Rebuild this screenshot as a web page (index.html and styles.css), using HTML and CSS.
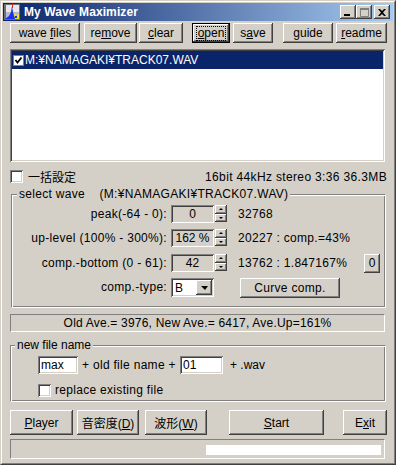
FILE: index.html
```html
<!doctype html>
<html lang="ja">

<head>
    <meta charset="utf-8">
    <title>My Wave Maximizer</title>
    <link rel="stylesheet" href="styles.css">
</head>

<body>

    <div class="window">
        <div class="frame">

            <div class="titlebar">
                <svg class="appicon" width="16" height="16" viewBox="0 0 16 16">
                    <rect x="0" y="0" width="16" height="16" fill="#6c6c7c" />
                    <rect x="2" y="1" width="13" height="7" fill="#e8e8e8" />
                    <rect x="2" y="8" width="13" height="7" fill="#b8b8c8" />
                    <polygon points="1,15 5,12 7,8 8,2 9,8 10,12 13,15" fill="#1830f0" />
                    <rect x="8" y="0" width="1" height="4" fill="#f02020" />
                    <polygon points="10,10 12,10 12,13 14,10 15,10 15,15 11,15" fill="#f0e020" />
                    <rect x="11" y="12" width="2" height="2" fill="#1830f0" />
                </svg>
                <span class="title">My Wave Maximizer</span>
                <div class="caption-btns">
                    <span class="cbtn">
                        <svg width="8" height="7" viewBox="0 0 8 7"><rect x="0" y="5" width="6" height="2" fill="#000" /></svg>
                    </span>
                    <span class="cbtn">
                        <svg width="9" height="9" viewBox="0 0 9 9"><path d="M0.5 1.5h8v7h-8z" fill="none" stroke="#808080" /><rect x="0" y="0" width="9" height="2" fill="#808080" /></svg>
                    </span>
                    <span class="cbtn close">
                        <svg width="8" height="7" viewBox="0 0 8 7"><path d="M0 0h2l2 2 2-2h2l-3 3.5 3 3.5h-2l-2-2-2 2h-2l3-3.5z" fill="#000" /></svg>
                    </span>
                </div>
            </div>

            <div class="client">

                <div class="toolbar">
                    <div class="btn b-wave"><span>wave <u>f</u>iles</span></div>
                    <div class="btn b-remove"><span>re<u>m</u>ove</span></div>
                    <div class="btn b-clear"><span><u>c</u>lear</span></div>
                    <div class="btn default b-open"><span class="focus"><u>o</u>pen</span></div>
                    <div class="btn b-save"><span>s<u>a</u>ve</span></div>
                    <div class="btn b-guide"><span><u>g</u>uide</span></div>
                    <div class="btn b-readme"><span><u>r</u>eadme</span></div>
                </div>

                <div class="listbox">
                    <div class="list-item selected">
                        <svg class="list-check" width="11" height="11" viewBox="0 0 11 11">
                            <rect x="0.5" y="0.5" width="10" height="10" fill="#fff" stroke="#808080" />
                            <path d="M2.5 5 l2 2.5 l4-5" fill="none" stroke="#000" stroke-width="1.8" />
                        </svg>
                        <span>M:¥NAMAGAKI¥TRACK07.WAV</span>
                    </div>
                </div>

                <div class="info-row">
                    <div class="check">
                        <span class="checkbox"></span>
                        <span>一括設定</span>
                    </div>
                    <span class="info">16bit 44kHz stereo 3:36 36.3MB</span>
                </div>

                <div class="group select-wave">
                    <span class="legend">select wave&nbsp;&nbsp;&nbsp;&nbsp;(M:¥NAMAGAKI¥TRACK07.WAV)</span>

                    <div class="param-row r-peak">
                        <span class="param-label">peak(-64 - 0):</span>
                        <span class="edit ro">0</span>
                        <span class="spin"><span class="spin-btn"><i class="up"></i></span><span class="spin-btn"><i class="down"></i></span></span>
                        <span class="param-value">32768</span>
                    </div>

                    <div class="param-row r-level">
                        <span class="param-label">up-level (100% - 300%):</span>
                        <span class="edit ro">162 %</span>
                        <span class="spin"><span class="spin-btn"><i class="up"></i></span><span class="spin-btn"><i class="down"></i></span></span>
                        <span class="param-value">20227 : comp.=43%</span>
                    </div>

                    <div class="param-row r-bottom">
                        <span class="param-label">comp.-bottom (0 - 61):</span>
                        <span class="edit ro">42</span>
                        <span class="spin"><span class="spin-btn"><i class="up"></i></span><span class="spin-btn"><i class="down"></i></span></span>
                        <span class="param-value">13762 : 1.847167%</span>
                        <div class="btn b-zero">0</div>
                    </div>

                    <div class="param-row r-type">
                        <span class="param-label">comp.-type:</span>
                        <span class="combo">
                            <span class="combo-text">B</span>
                            <span class="combo-btn"><i class="drop"></i></span>
                        </span>
                        <div class="btn b-curve">Curve comp.</div>
                    </div>
                </div>

                <div class="panel">Old Ave.= 3976, New Ave.= 6417, Ave.Up=161%</div>

                <div class="group new-name">
                    <span class="legend">new file name</span>

                    <div class="name-row">
                        <span class="edit white e-prefix">max</span>
                        <span class="name-text">+ old file name +</span>
                        <span class="edit white e-number">01</span>
                        <span class="ext">+ .wav</span>
                    </div>

                    <div class="check replace">
                        <span class="checkbox"></span>
                        <span>replace existing file</span>
                    </div>
                </div>

                <div class="actions">
                    <div class="btn b-player"><span><u>P</u>layer</span></div>
                    <div class="btn b-density"><span>音密度(<u>D</u>)</span></div>
                    <div class="btn b-wave2"><span>波形(<u>W</u>)</span></div>
                    <div class="btn b-start"><span><u>S</u>tart</span></div>
                    <div class="btn b-exit"><span>E<u>x</u>it</span></div>
                </div>

                <div class="statusbar">
                    <span class="progress"></span>
                </div>

            </div>
        </div>
    </div>

</body>

</html>
```

FILE: styles.css
```css
body {
    margin: 0;
    padding: 0;
    background-color: #d4d0c8;
    font-family: "Liberation Sans", "Noto Sans CJK JP", sans-serif;
    font-size: 12px;
    color: #000;
}

u {
    text-decoration: underline;
    text-underline-offset: 1px;
}

.window {
    box-sizing: border-box;
    width: 396px;
    height: 465px;
    border: 1px solid;
    border-color: #d4d0c8 #404040 #404040 #d4d0c8;
    background: #d4d0c8;
}

.frame {
    box-sizing: border-box;
    height: 100%;
    border: 1px solid;
    border-color: #fff #808080 #808080 #fff;
    padding: 1px;
}

/* title bar */

.titlebar {
    display: flex;
    align-items: center;
    height: 18px;
    padding-left: 1px;
    padding-right: 3px;
    background: linear-gradient(to right, #0a246a, #a6caf0);
}

.appicon {
    flex: none;
}

.title {
    margin-left: 4px;
    color: #fff;
    font-weight: bold;
    font-size: 12px;
    letter-spacing: 0.1px;
}

.caption-btns {
    display: flex;
    margin-left: auto;
}

.cbtn {
    display: flex;
    align-items: center;
    justify-content: center;
    width: 16px;
    height: 14px;
    background: #d4d0c8;
    box-shadow: inset -1px -1px #404040, inset 1px 1px #fff, inset -2px -2px #808080;
}

.cbtn.close {
    margin-left: 2px;
}

/* bevels */

.btn {
    box-sizing: border-box;
    display: flex;
    align-items: center;
    justify-content: center;
    flex: none;
    background: #d4d0c8;
    box-shadow: inset -1px -1px #404040, inset 1px 1px #fff, inset -2px -2px #808080;
    white-space: nowrap;
}

.btn.default {
    box-shadow: inset 0 0 0 1px #000, inset -2px -2px #404040, inset 2px 2px #fff, inset -3px -3px #808080;
}

.focus {
    outline: 1px dotted #000;
    outline-offset: 0;
    padding: 0 1px;
    line-height: 13px;
}

.edit {
    box-sizing: border-box;
    display: flex;
    align-items: center;
    flex: none;
    height: 18px;
    box-shadow: inset 1px 1px #808080, inset -1px -1px #fff, inset 2px 2px #404040, inset -2px -2px #d4d0c8;
}

.edit.ro {
    justify-content: center;
    width: 43px;
    margin-left: 4px;
    background: #d4d0c8;
}

.edit.white {
    background: #fff;
    padding-left: 3px;
}

.checkbox {
    display: inline-block;
    box-sizing: border-box;
    width: 13px;
    height: 13px;
    background: #fff;
    box-shadow: inset 1px 1px #808080, inset -1px -1px #fff, inset 2px 2px #404040, inset -2px -2px #d4d0c8;
    flex: none;
}

.check {
    display: flex;
    align-items: center;
    gap: 5px;
}

/* client area */

.client {
    padding-left: 7px;
}

.toolbar {
    display: flex;
    height: 20px;
    margin-top: 2px;
}

.toolbar .btn {
    height: 20px;
}

.b-wave { width: 70px; }
.b-remove { width: 53px; margin-left: 4px; }
.b-clear { width: 44px; margin-left: 2px; }
.b-open { width: 38px; margin-left: 9px; }
.b-save { width: 40px; margin-left: 3px; }
.b-guide { width: 50px; margin-left: 10px; }
.b-readme { width: 51px; margin-left: 3px; }

.listbox {
    box-sizing: border-box;
    width: 375px;
    height: 113px;
    margin-top: 6px;
    padding: 2px;
    background: #fff;
    box-shadow: inset 1px 1px #808080, inset -1px -1px #fff, inset 2px 2px #404040, inset -2px -2px #d4d0c8;
}

.list-item {
    display: flex;
    align-items: center;
    height: 18px;
}

.list-item.selected {
    background: #0a246a;
    color: #fff;
}

.list-check {
    margin-left: 1px;
    margin-right: 1px;
}

.info-row {
    display: flex;
    justify-content: space-between;
    align-items: center;
    width: 377px;
    height: 13px;
    margin-top: 8px;
}

.info {
    letter-spacing: 0.35px;
}

/* group boxes */

.group {
    box-sizing: border-box;
    border: 1px solid;
    border-color: #808080 #fff #fff #808080;
    box-shadow: inset 1px 1px #fff, inset -1px -1px #808080;
}

.legend {
    display: block;
    width: fit-content;
    height: 13px;
    line-height: 13px;
    margin-top: -7px;
    padding: 0 2px;
    background: #d4d0c8;
}

.select-wave {
    width: 375px;
    height: 114px;
    margin-top: 11px;
    margin-left: 1px;
}

.select-wave .legend {
    margin-left: 5px;
    letter-spacing: 0.3px;
}

.param-row {
    display: flex;
    align-items: center;
    height: 18px;
}

.r-peak { margin-top: 4px; }
.r-level { margin-top: 6px; }
.r-bottom { margin-top: 7px; }
.r-type {
    margin-top: 6px;
    height: 20px;
    align-items: flex-start;
}

.param-label {
    width: 155px;
    text-align: right;
    letter-spacing: 0.3px;
    flex: none;
}

.r-type .param-label {
    line-height: 19px;
}

.spin {
    display: flex;
    flex-direction: column;
    width: 12px;
    height: 17px;
    margin-left: 1px;
    margin-top: -1px;
}

.spin-btn {
    display: flex;
    align-items: center;
    justify-content: center;
    height: 8.5px;
    background: #d4d0c8;
    box-shadow: inset -1px -1px #404040, inset 1px 1px #fff, inset -2px -2px #808080;
}

.up,
.down,
.drop {
    display: block;
    width: 0;
    height: 0;
    border-left: 2px solid transparent;
    border-right: 2px solid transparent;
}

.up {
    border-bottom: 2px solid #000;
}

.down {
    border-top: 2px solid #000;
}

.param-value {
    margin-left: 11px;
    letter-spacing: 0.3px;
}

.b-zero {
    width: 16px;
    height: 19px;
    margin-left: auto;
    margin-right: 5px;
}

.combo {
    box-sizing: border-box;
    display: flex;
    align-items: center;
    width: 43px;
    height: 19px;
    margin-left: 4px;
    padding: 2px;
    background: #fff;
    box-shadow: inset 1px 1px #808080, inset -1px -1px #fff, inset 2px 2px #404040, inset -2px -2px #d4d0c8;
}

.combo-text {
    flex: 1;
    padding-left: 2px;
}

.combo-btn {
    display: flex;
    align-items: center;
    justify-content: center;
    width: 16px;
    height: 15px;
    background: #d4d0c8;
    box-shadow: inset -1px -1px #404040, inset 1px 1px #fff, inset -2px -2px #808080;
}

.drop {
    border-left-width: 4px;
    border-right-width: 3px;
    border-top: 4px solid #000;
}

.b-curve {
    width: 100px;
    height: 20px;
    margin-left: 26px;
    letter-spacing: 0.3px;
}

.panel {
    box-sizing: border-box;
    width: 375px;
    height: 18px;
    margin-top: 6px;
    border: 1px solid;
    border-color: #808080 #fff #fff #808080;
    text-align: center;
    line-height: 16px;
    letter-spacing: 0.2px;
}

.new-name {
    width: 376px;
    height: 57px;
    margin-top: 13px;
}

.new-name .legend {
    margin-left: 4px;
}

.name-row {
    display: flex;
    align-items: center;
    margin-top: 4px;
}

.e-prefix {
    width: 40px;
    margin-left: 27px;
}

.name-text {
    width: 98px;
    margin-left: 4px;
    letter-spacing: 0.3px;
}

.e-number {
    width: 43px;
}

.ext {
    margin-left: 7px;
}

.replace {
    margin-top: 9px;
    margin-left: 27px;
    gap: 4px;
    letter-spacing: 0.3px;
}

/* bottom */

.actions {
    display: flex;
    margin-top: 8px;
}

.actions .btn {
    height: 25px;
}

.b-player { width: 63px; }
.b-density { width: 62px; margin-left: 4px; }
.b-wave2 { width: 62px; margin-left: 6px; }
.b-start { width: 95px; margin-left: 22px; }
.b-exit { width: 44px; margin-left: 19px; }

.statusbar {
    box-sizing: border-box;
    width: 375px;
    height: 20px;
    margin-top: 4px;
    padding: 5px 0 0 195px;
    border: 1px solid;
    border-color: #808080 #fff #fff #808080;
}

.progress {
    display: block;
    width: 175px;
    height: 10px;
    background: #fff;
}
```
